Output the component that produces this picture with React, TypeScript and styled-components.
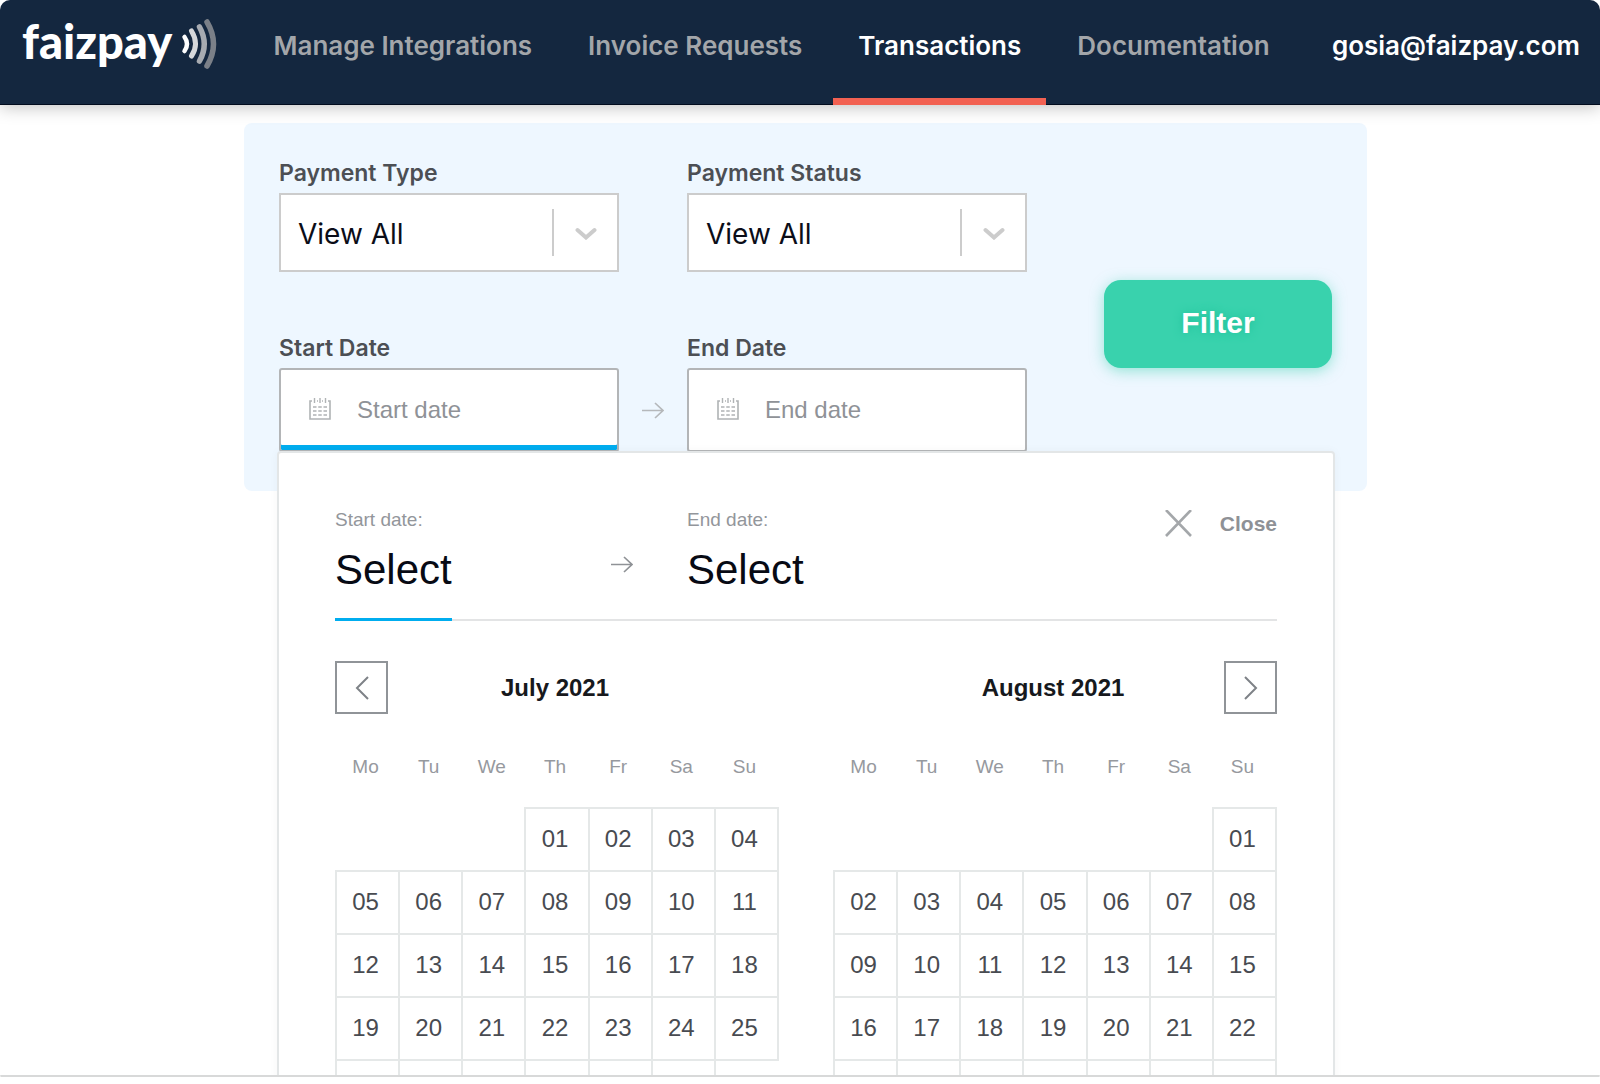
import React, { useState } from "react";
import styled, { createGlobalStyle } from "styled-components";

const inter = `Inter, "Noto Sans", sans-serif`;
const helvetica = `"Liberation Sans", Arial, sans-serif`;

const GlobalStyle = createGlobalStyle`
  *, *::before, *::after { box-sizing: border-box; }
  body { margin: 0; background: #fff; font-family: ${inter}; }
  button, input, select { margin: 0; font: inherit; color: inherit; }
  button { padding: 0; border: 0; background: none; cursor: pointer; text-align: left; }
`;

const Window = styled.div`
  display: flex;
  flex-direction: column;
  height: 100vh;
  border-radius: 10px;
  overflow: hidden;
  background: #fff;
`;

const Header = styled.header`
  position: relative;
  z-index: 1;
  display: flex;
  flex: none;
  justify-content: space-between;
  height: 105px;
  padding: 0 20px 0 22px;
  background: #14273f;
  box-shadow: inset 0 -1px 0 #020c1e, 0 2px 16px rgba(0, 0, 0, 0.25);
`;

const Brand = styled.a`
  display: flex;
  align-items: center;
  gap: 9px;
  padding-bottom: 17px;
  color: #fff;
  text-decoration: none;
`;

const Wordmark = styled.span`
  font: 900 47px/52px Lato, sans-serif;
  padding-bottom: 6px;
`;

const Nav = styled.nav`
  display: flex;
  gap: 6px;
  margin-right: 6px;
`;

const NavLink = styled.a<{ $active?: boolean }>`
  display: flex;
  align-items: center;
  padding: 0 25px 8px;
  border-bottom: 7px solid ${(p) => (p.$active ? "#f26152" : "transparent")};
  color: ${(p) => (p.$active ? "#fff" : "#a3a6aa")};
  font-size: 26px;
  font-weight: 600;
  text-decoration: none;
  white-space: nowrap;
`;

const Account = styled(NavLink)`
  padding: 0 0 8px;
  color: #fff;
`;

const Main = styled.main`
  flex: 1;
  min-height: 0;
  padding: 18px 233px 0 244px;
  overflow-x: hidden;
  overflow-y: auto;
  scrollbar-width: none;
`;

const BottomEdge = styled.footer`
  flex: none;
  height: 9px;
  border-top: 2px solid #d8d9d9;
`;

const Panel = styled.section`
  padding: 34px 35px 39px;
  border-radius: 8px;
  background: #eef7ff;
`;

const FilterForm = styled.form`
  position: relative;
  display: flex;
  gap: 77px;
`;

const Fields = styled.div`
  flex: 1;
  min-width: 0;
  display: grid;
  grid-template-columns: minmax(0, 1fr) 68px minmax(0, 1fr);
  row-gap: 60px;
`;

const Field = styled.div`
  display: flex;
  flex-direction: column;
  gap: 4px;
`;

const Label = styled.label`
  color: #4c4f54;
  font-size: 23px;
  font-weight: 600;
  line-height: 32px;
`;

const SelectBox = styled.div`
  position: relative;
`;

const Select = styled.select`
  display: block;
  width: 100%;
  height: 79px;
  padding: 2px 80px 0 17px;
  border: 2px solid #ccc;
  border-radius: 0;
  background: #fff;
  color: #0b0d18;
  font-size: 28px;
  appearance: none;
`;

const SelectIndicator = styled.span`
  position: absolute;
  top: 16px;
  right: 2px;
  display: flex;
  align-items: center;
  justify-content: center;
  width: 65px;
  height: 47px;
  border-left: 2px solid #ccc;
  pointer-events: none;
`;

const Spacer = styled.span``;

const RangeArrow = styled.span`
  display: flex;
  align-items: center;
  justify-content: center;
  align-self: end;
  height: 84px;
  color: #b5b8bb;
`;

const DateBox = styled.div<{ $active?: boolean }>`
  display: flex;
  align-items: center;
  gap: 26px;
  height: 84px;
  padding-left: 28px;
  border: 2px solid #b3b5b7;
  border-radius: 3px;
  background: #fff;
  box-shadow: ${(p) => (p.$active ? "inset 0 -5px 0 #00adef" : "none")};
`;

const DateInput = styled.input`
  flex: 1;
  min-width: 0;
  padding: 0;
  border: 0;
  outline: 0;
  background: transparent;
  font: 24px/32px ${helvetica};
  color: #4a4d52;

  &::placeholder {
    color: #8f9297;
    opacity: 1;
  }
`;

const FilterButton = styled.button`
  flex: none;
  align-self: flex-end;
  width: 228px;
  height: 88px;
  margin-bottom: 84px;
  padding-bottom: 2px;
  border-radius: 17px;
  background: #39d2ad;
  box-shadow: 0 3px 14px rgba(57, 210, 173, 0.5);
  color: #fff;
  font: bold 30px/36px ${helvetica};
  text-align: center;
  text-shadow: 0 0 10px #1fc09a;
`;

const Popover = styled.section`
  position: absolute;
  top: calc(100% - 1px);
  left: -2px;
  right: -3px;
  padding: 55px 56px 56px;
  border: 2px solid #e3e6e7;
  border-radius: 4px;
  background: #fff;
  box-shadow: 0 0 10px rgba(0, 0, 0, 0.04);
  font-family: ${helvetica};
`;

const RangeSummary = styled.div`
  display: grid;
  grid-template-columns: 276px 76px 1fr auto;
  border-bottom: 2px solid #e3e4e5;
`;

const RangeEnd = styled.button`
  display: flex;
  flex-direction: column;
  align-items: flex-start;
  gap: 13px;
  margin-bottom: -2px;
`;

const RangeCaption = styled.span`
  color: #93969b;
  font-size: 19px;
  line-height: 24px;
`;

const RangeValue = styled.span<{ $active?: boolean }>`
  padding-bottom: 23px;
  border-bottom: 3px solid ${(p) => (p.$active ? "#00adef" : "transparent")};
  color: #070a14;
  font-size: 42px;
  line-height: 50px;
`;

const SummaryArrow = styled.span`
  align-self: center;
  display: flex;
  padding-top: 2px;
  color: #8f9296;
`;

const CloseButton = styled.button`
  align-self: start;
  display: flex;
  align-items: center;
  gap: 28px;
  height: 32px;
  color: #8e9196;
  font-size: 21px;
  font-weight: bold;
`;

const Months = styled.div`
  display: grid;
  grid-template-columns: 1fr 1fr;
  gap: 54px;
  padding-top: 40px;
`;

const MonthHeader = styled.div`
  display: grid;
  grid-template-columns: 53px 1fr 53px;
  align-items: center;
`;

const MonthTitle = styled.h2`
  grid-column: 2;
  margin: 0;
  padding-right: 4px;
  color: #17191d;
  font-size: 24px;
  line-height: 53px;
  text-align: center;
`;

const StepButton = styled.button`
  display: flex;
  align-items: center;
  justify-content: center;
  width: 53px;
  height: 53px;
  border: 2px solid #909498;
  color: #7e8287;
`;

const Calendar = styled.table`
  width: 100%;
  table-layout: fixed;
  border-collapse: collapse;
`;

const Weekday = styled.th`
  height: 94px;
  padding: 41px 4px 0 0;
  color: #96999e;
  font-size: 19px;
  font-weight: normal;
  line-height: 24px;
  text-align: center;
  vertical-align: top;
`;

const DayCell = styled.td<{ $empty: boolean }>`
  height: 63px;
  padding: 0;
  border: ${(p) => (p.$empty ? "0" : "2px solid #e5e8e8")};
`;

const DayButton = styled.button`
  display: block;
  width: 100%;
  height: 61px;
  padding: 0 4px 2px 0;
  color: #484b51;
  font-size: 24px;
  text-align: center;
`;

const Waves = () => (
  <svg width="36" height="52" viewBox="0 0 36 52" fill="none" strokeLinecap="round" aria-hidden="true">
    <path d="M3.5 19Q8.500 26 3.500 33" stroke="#fff" strokeWidth="4.500" />
    <path d="M10.500 13Q18.500 26 10.500 38" stroke="#d6d8db" strokeWidth="5" />
    <path d="M18.500 9Q28 26 18.500 43" stroke="#a7abb1" strokeWidth="5.500" />
    <path d="M26 4Q39 26 26 48" stroke="#7b8088" strokeWidth="5.500" />
  </svg>
);

const CalendarIcon = () => (
  <svg width="22" height="25" viewBox="0 0 22 25" fill="none" stroke="#b0b3b5" aria-hidden="true">
    <path d="M3 3H1V21H21V3H19M8 3H9M13 3H14" strokeWidth="1.600" />
    <path d="M5.500 0V5M11 0V5M16.500 0V5" strokeWidth="1.400" />
    <path d="M4 9H18M4 13H18M4 17H18" strokeWidth="1.700" strokeDasharray="3.500 1.750" />
  </svg>
);

const ArrowIcon = () => (
  <svg width="22" height="17" viewBox="0 0 22 17" fill="none" stroke="currentColor" strokeWidth="1.700" aria-hidden="true">
    <path d="M0 8.500H21M13 1L21 8.500L13 16" />
  </svg>
);

const ChevronDown = () => (
  <svg width="22" height="14" viewBox="0 0 22 14" fill="none" stroke="#ccc" strokeWidth="4" strokeLinecap="round" aria-hidden="true">
    <path d="M2.500 4L11 11.500L19.500 4" />
  </svg>
);

const StepIcon = ({ next = false }: { next?: boolean }) => (
  <svg width="14" height="24" viewBox="0 0 14 24" fill="none" stroke="currentColor" strokeWidth="2" aria-hidden="true">
    <path d={next ? "M1 1L12 12L1 23" : "M13 1L2 12L13 23"} />
  </svg>
);

const CrossIcon = () => (
  <svg width="27" height="28" viewBox="0 0 27 28" fill="none" stroke="#a4a7aa" strokeWidth="2.600" aria-hidden="true">
    <path d="M1 0L26 26M26 0L1 26" />
  </svg>
);

const weekdays = ["Mo", "Tu", "We", "Th", "Fr", "Sa", "Su"];
const links = ["Manage Integrations", "Invoice Requests", "Transactions", "Documentation"];

function weeksOf(offset: number, days: number): (string | null)[][] {
  const rows = Math.ceil((offset + days) / 7);
  return Array.from({ length: rows }, (_, r) =>
    Array.from({ length: 7 }, (_, c) => {
      const day = r * 7 + c - offset + 1;
      return day < 1 || day > days ? null : String(day).padStart(2, "0");
    })
  );
}

interface MonthProps {
  title: string;
  offset: number;
  step: "previous" | "next";
  onPick: (day: string) => void;
}

function Month({ title, offset, step, onPick }: MonthProps) {
  return (
    <div>
      <MonthHeader>
        {step === "previous" && (
          <StepButton type="button" aria-label="Previous month">
            <StepIcon />
          </StepButton>
        )}
        <MonthTitle>{title}</MonthTitle>
        {step === "next" && (
          <StepButton type="button" aria-label="Next month">
            <StepIcon next />
          </StepButton>
        )}
      </MonthHeader>
      <Calendar aria-label={title}>
        <thead>
          <tr>
            {weekdays.map((d) => (
              <Weekday key={d} scope="col">{d}</Weekday>
            ))}
          </tr>
        </thead>
        <tbody>
          {weeksOf(offset, 31).map((week, r) => (
            <tr key={r}>
              {week.map((day, c) => (
                <DayCell key={c} $empty={day === null}>
                  {day && (
                    <DayButton type="button" onClick={() => onPick(`${day} ${title}`)}>{day}</DayButton>
                  )}
                </DayCell>
              ))}
            </tr>
          ))}
        </tbody>
      </Calendar>
    </div>
  );
}

function SelectField({ id, label }: { id: string; label: string }) {
  return (
    <Field>
      <Label htmlFor={id}>{label}</Label>
      <SelectBox>
        <Select id={id}>
          <option>View All</option>
        </Select>
        <SelectIndicator>
          <ChevronDown />
        </SelectIndicator>
      </SelectBox>
    </Field>
  );
}

interface DateFieldProps {
  id: string;
  label: string;
  placeholder: string;
  value: string;
  active: boolean;
  onOpen: () => void;
}

function DateField({ id, label, placeholder, value, active, onOpen }: DateFieldProps) {
  return (
    <Field>
      <Label htmlFor={id}>{label}</Label>
      <DateBox $active={active}>
        <CalendarIcon />
        <DateInput id={id} placeholder={placeholder} value={value} readOnly onClick={onOpen} />
      </DateBox>
    </Field>
  );
}

export default function App() {
  const [open, setOpen] = useState(true);
  const [side, setSide] = useState<"start" | "end">("start");
  const [start, setStart] = useState("");
  const [end, setEnd] = useState("");

  const show = (which: "start" | "end") => {
    setSide(which);
    setOpen(true);
  };

  const pick = (day: string) => {
    if (side === "start") {
      setStart(day);
      setSide("end");
    } else {
      setEnd(day);
    }
  };

  return (
    <>
      <GlobalStyle />
      <Window>
        <Header>
          <Brand href="#">
            <Wordmark>faizpay</Wordmark>
            <Waves />
          </Brand>
          <Nav>
            {links.map((text) => (
              <NavLink key={text} href="#" $active={text === "Transactions"}>{text}</NavLink>
            ))}
          </Nav>
          <Account href="#">gosia@faizpay.com</Account>
        </Header>
        <Main>
          <Panel>
            <FilterForm onSubmit={(e: React.FormEvent) => e.preventDefault()}>
              <Fields>
                <SelectField id="payment-type" label="Payment Type" />
                <Spacer />
                <SelectField id="payment-status" label="Payment Status" />
                <DateField
                  id="start-date"
                  label="Start Date"
                  placeholder="Start date"
                  value={start}
                  active={open && side === "start"}
                  onOpen={() => show("start")}
                />
                <RangeArrow>
                  <ArrowIcon />
                </RangeArrow>
                <DateField
                  id="end-date"
                  label="End Date"
                  placeholder="End date"
                  value={end}
                  active={open && side === "end"}
                  onOpen={() => show("end")}
                />
              </Fields>
              <FilterButton type="submit">Filter</FilterButton>
              {open && (
                <Popover aria-label="Choose dates">
                  <RangeSummary>
                    <RangeEnd type="button" onClick={() => setSide("start")}>
                      <RangeCaption>Start date:</RangeCaption>
                      <RangeValue $active={side === "start"}>{start || "Select"}</RangeValue>
                    </RangeEnd>
                    <SummaryArrow>
                      <ArrowIcon />
                    </SummaryArrow>
                    <RangeEnd type="button" onClick={() => setSide("end")}>
                      <RangeCaption>End date:</RangeCaption>
                      <RangeValue $active={side === "end"}>{end || "Select"}</RangeValue>
                    </RangeEnd>
                    <CloseButton type="button" onClick={() => setOpen(false)}>
                      <CrossIcon />
                      Close
                    </CloseButton>
                  </RangeSummary>
                  <Months>
                    <Month title="July 2021" offset={3} step="previous" onPick={pick} />
                    <Month title="August 2021" offset={6} step="next" onPick={pick} />
                  </Months>
                </Popover>
              )}
            </FilterForm>
          </Panel>
        </Main>
        <BottomEdge />
      </Window>
    </>
  );
}
